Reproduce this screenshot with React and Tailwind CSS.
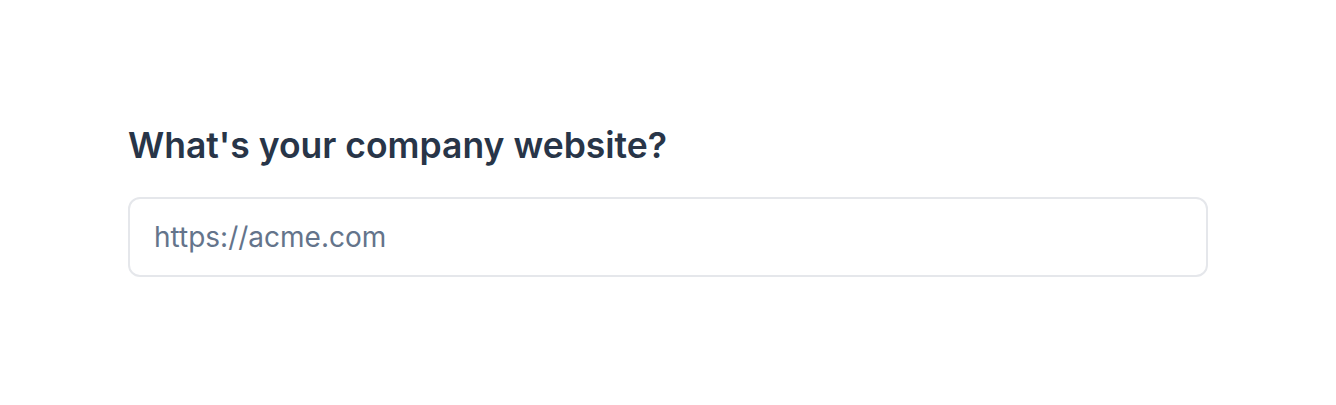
export default function App() {
  return (
    <div
      className="min-h-[405px] bg-white flex justify-center pt-[126px]"
      style={{ fontFamily: "Inter, 'Noto Sans', sans-serif" }}
    >
      <div className="w-[1080px] flex flex-col gap-[31px]">
        <h1 className="text-[35.5px] leading-10 font-semibold text-[#283548]">
          What's your company website?
        </h1>
        <input
          type="text"
          placeholder="https://acme.com"
          className="w-full h-[80px] px-6 rounded-xl border-2 border-[#e5e7eb] text-[28px] text-[#283548] placeholder:text-[#64748b] focus:outline-none"
        />
      </div>
    </div>
  );
}
